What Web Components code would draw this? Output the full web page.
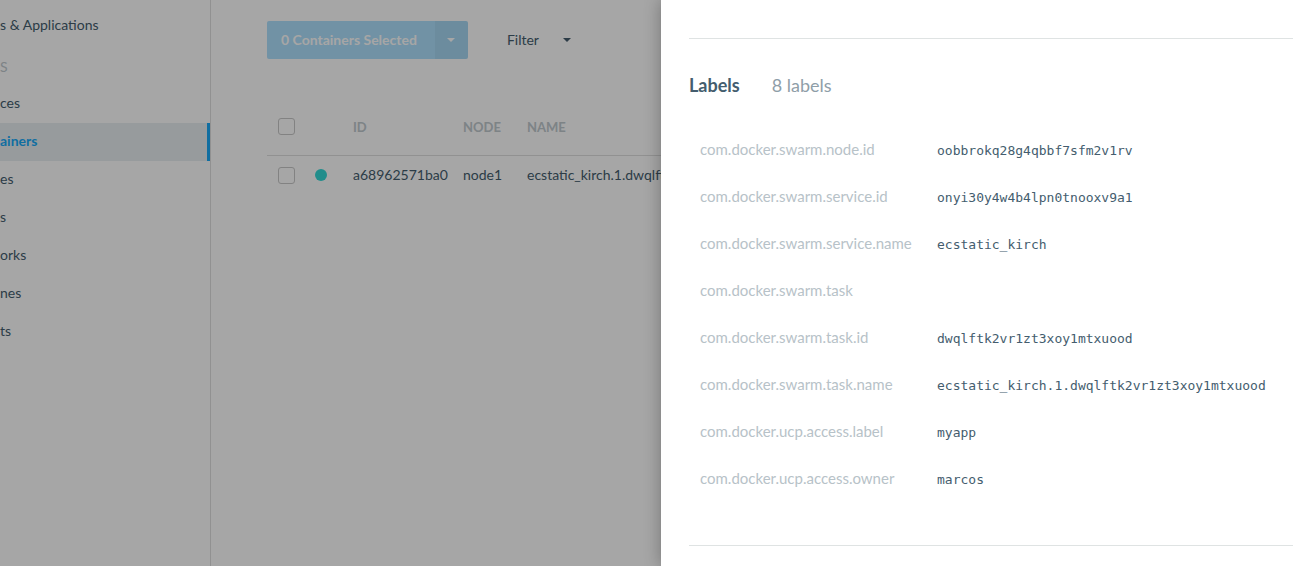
<!DOCTYPE html>
<html lang="en">
<head>
<meta charset="utf-8">
<title>Containers</title>
<style>
  html, body { margin: 0; height: 100%; }
  body { font: 14px/20px Lato, "Open Sans", sans-serif; color: #445d6e; background: #fff; overflow: hidden; }
</style>
</head>
<body>
<app-shell>
  <side-nav slot="nav">
    <nav-item>s &amp; Applications</nav-item>
    <nav-heading>S</nav-heading>
    <nav-item>ces</nav-item>
    <nav-item active>ainers</nav-item>
    <nav-item>es</nav-item>
    <nav-item>s</nav-item>
    <nav-item>orks</nav-item>
    <nav-item>nes</nav-item>
    <nav-item>ts</nav-item>
  </side-nav>
  <container-toolbar slot="main"></container-toolbar>
  <container-table slot="main"></container-table>
  <detail-drawer slot="drawer">
    <label-list heading="Labels" summary="8 labels"></label-list>
  </detail-drawer>
</app-shell>
<script>
const define = (name, html, setup) => {
  const template = document.createElement('template');
  template.innerHTML = html;
  customElements.define(name, class extends HTMLElement {
    constructor() {
      super();
      this.attachShadow({ mode: 'open' }).append(template.content.cloneNode(true));
    }
    connectedCallback() { if (setup) setup(this, this.shadowRoot); }
  });
};

define('app-shell', `
  <style>
    :host { display: grid; grid-template-columns: 211px minmax(0, 1fr); min-height: 100%; position: relative; overflow: hidden; }
    main { padding: 21px 28px 0 56px; min-width: 0; }
    .backdrop { position: absolute; inset: 0; background: rgba(0, 0, 0, .35); }
    ::slotted([slot="drawer"]) { position: absolute; top: 0; right: 0; bottom: 0; }
  </style>
  <slot name="nav"></slot>
  <main><slot name="main"></slot></main>
  <div class="backdrop"></div>
  <slot name="drawer"></slot>`);

define('side-nav', `
  <style>
    :host { display: block; border-right: 1px solid #dfdfdf; padding-top: 7px; }
    nav { display: flex; flex-direction: column; }
  </style>
  <nav aria-label="Main"><slot></slot></nav>`);

define('nav-item', `
  <style>
    :host { display: block; border-right: 3px solid transparent; }
    a { display: block; padding: 8px 0 10px; color: inherit; text-decoration: none; }
    :host([active]) { background: #e8eef2; border-color: #1aaaf8; color: #1aaaf8; font-weight: 700; }
  </style>
  <a href="#"><slot></slot></a>`);

define('nav-heading', `
  <style>
    :host { display: block; padding: 12px 0 8px; color: #c0c9ce; }
  </style>
  <slot></slot>`);

define('caret-icon', `
  <style>
    :host { display: flex; }
    svg { display: block; fill: currentColor; }
  </style>
  <svg width="8" height="4" viewBox="0 0 8 4" aria-hidden="true"><path d="M0 0h8L4 4z"/></svg>`);

define('container-toolbar', `
  <style>
    :host { display: flex; align-items: center; gap: 25px; }
    button { font: inherit; border: 0; margin: 0; height: 38px; cursor: pointer; display: flex; align-items: center; padding: 0 14px; }
    .split { display: flex; border-radius: 2px; overflow: hidden; }
    .split button { background: #aee0fd; color: #fff; font-weight: 700; padding: 0 18px 0 14px; }
    .split .toggle { background: #a7d7f3; padding: 0; width: 33px; justify-content: center; }
    .filter { gap: 24px; background: none; color: #445d6e; }
  </style>
  <div class="split">
    <button type="button">0 Containers Selected</button>
    <button type="button" class="toggle" aria-label="Container actions"><caret-icon></caret-icon></button>
  </div>
  <button type="button" class="filter">Filter <caret-icon></caret-icon></button>`);

define('container-table', `
  <style>
    :host { display: block; margin-top: 40px; }
    table { width: 100%; border-collapse: collapse; table-layout: fixed; }
    th, td { text-align: left; padding: 0; white-space: nowrap; overflow: hidden; box-sizing: border-box; }
    th { height: 56px; color: #c0c9ce; font-size: 13px; font-weight: 700; border-bottom: 1px solid #dfdfdf; }
    td { height: 40px; }
    .check { width: 48px; }
    .state { width: 38px; }
    .id { width: 110px; }
    .node { width: 64px; }
    input { appearance: none; display: block; box-sizing: border-box; width: 17px; height: 17px; margin: 0 0 0 11px; border: 1px solid #c8c8c8; border-radius: 3px; background: #fff; }
    .dot { display: block; width: 12px; height: 12px; border-radius: 50%; background: #34d9d6; }
  </style>
  <table>
    <thead><tr>
      <th class="check"><input type="checkbox" aria-label="Select all containers"></th>
      <th class="state"></th>
      <th class="id">ID</th>
      <th class="node">NODE</th>
      <th>NAME</th>
    </tr></thead>
    <tbody><tr>
      <td><input type="checkbox" aria-label="Select container"></td>
      <td><span class="dot" role="img" aria-label="Running"></span></td>
      <td>a68962571ba0</td>
      <td>node1</td>
      <td>ecstatic_kirch.1.dwqlft</td>
    </tr></tbody>
  </table>`);

define('detail-drawer', `
  <style>
    :host { display: block; box-sizing: border-box; width: 632px; max-width: 100%; padding: 38px 0 0 28px; background: #fff; box-shadow: 0 0 16px rgba(0, 0, 0, .3); }
  </style>
  <slot></slot>`);

define('label-list', `
  <style>
    :host { display: block; border: solid #dfe3e3; border-width: 1px 0; padding: 34px 0 42px; }
    header { display: flex; align-items: baseline; gap: 32px; font-size: 18px; line-height: 24px; color: #8f9ea8; }
    h2 { margin: 0; font-size: inherit; font-weight: 700; color: #445d6e; }
    table { margin-top: 30px; border-collapse: collapse; }
    th, td { height: 47px; padding: 0; text-align: left; white-space: nowrap; box-sizing: border-box; }
    th { width: 248px; padding: 0 0 3px 11px; color: #b7c2c8; font-size: 15px; font-weight: 400; }
    td { font-family: "DejaVu Sans Mono", monospace; font-size: 13px; color: #445d6e; }
  </style>
  <header><h2></h2><span></span></header>
  <table><tbody></tbody></table>`, (host, root) => {
  root.querySelector('h2').textContent = host.getAttribute('heading');
  root.querySelector('header span').textContent = host.getAttribute('summary');
  const labels = [
    ['com.docker.swarm.node.id', 'oobbrokq28g4qbbf7sfm2v1rv'],
    ['com.docker.swarm.service.id', 'onyi30y4w4b4lpn0tnooxv9a1'],
    ['com.docker.swarm.service.name', 'ecstatic_kirch'],
    ['com.docker.swarm.task', ''],
    ['com.docker.swarm.task.id', 'dwqlftk2vr1zt3xoy1mtxuood'],
    ['com.docker.swarm.task.name', 'ecstatic_kirch.1.dwqlftk2vr1zt3xoy1mtxuood'],
    ['com.docker.ucp.access.label', 'myapp'],
    ['com.docker.ucp.access.owner', 'marcos'],
  ];
  const body = root.querySelector('tbody');
  for (const [key, value] of labels) {
    const row = body.insertRow();
    const head = document.createElement('th');
    head.scope = 'row';
    head.textContent = key;
    row.append(head);
    row.insertCell().textContent = value;
  }
});
</script>
</body>
</html>
